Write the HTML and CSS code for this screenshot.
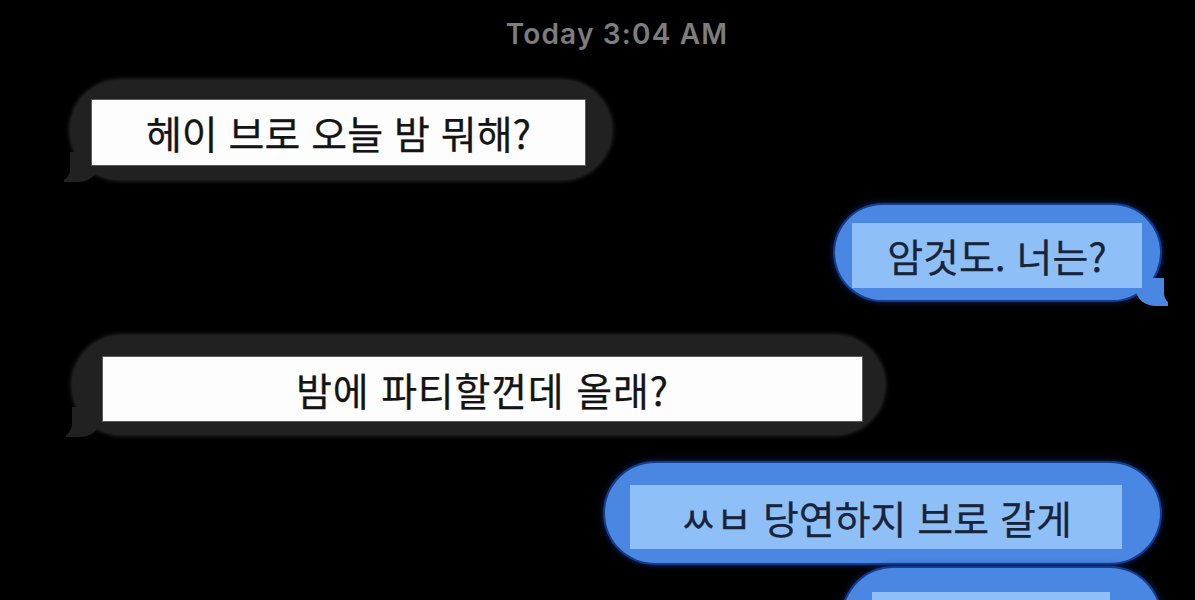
FILE: index.html
```html
<!DOCTYPE html>
<html lang="ko">
<head>
  <meta charset="UTF-8" />
  <meta name="viewport" content="width=device-width, initial-scale=1.0"/>
  <title>Messages</title>
  <link rel="stylesheet" href="styles.css">
</head>
<body>
  <main class="thread">
    <p class="stamp">Today 3:04 AM</p>

    <div class="bubble in first">
      <div class="patch">헤이 브로 오늘 밤 뭐해?</div>
    </div>

    <div class="bubble out second">
      <div class="patch">암것도. 너는?</div>
    </div>

    <div class="bubble in third">
      <div class="patch">밤에 파티할껀데 올래?</div>
    </div>

    <div class="bubble out fourth">
      <div class="patch">ㅆㅂ 당연하지 브로 갈게</div>
    </div>

    <div class="bubble out fifth">
      <div class="patch"></div>
    </div>
  </main>
</body>
</html>
```

FILE: styles.css
```css
body {
  margin: 0;
  padding: 0;
  background-color: #000;
  font-family: 'Noto Sans CJK KR', 'Noto Sans', sans-serif;
}
.thread {
  display: flex;
  flex-direction: column;
  height: 600px;
  padding-top: 14px;
  box-sizing: border-box;
  overflow: hidden;
}
.stamp {
  flex: none;
  margin: 0;
  padding-left: 39px;
  height: 40px;
  line-height: 40px;
  text-align: center;
  font-family: Inter, 'Liberation Sans', sans-serif;
  font-size: 28px;
  font-weight: 600;
  color: #7d7d7d;
  letter-spacing: 1.2px;
}
.bubble {
  flex: none;
  position: relative;
  display: flex;
  box-sizing: border-box;
  height: 100px;
  border-radius: 50px;
}
.bubble .patch {
  position: relative;
  z-index: 1;
  flex: 1;
  display: flex;
  align-items: center;
  justify-content: center;
  font-size: 39px;
  font-weight: 400;
  -webkit-text-stroke: 0.25px currentColor;
  line-height: 1;
  white-space: nowrap;
}
.in {
  align-self: flex-start;
  background-color: #212121;
  box-shadow: 0 0 4px 1px #2a2a2a;
}
.in .patch {
  background-color: #fdfdfd;
  color: #141414;
  box-shadow: 0 0 0 1px #5a5a5a;
}
.out {
  align-self: flex-end;
  margin-right: 35px;
  background-color: #4a87e3;
  box-shadow: 0 0 0 2px #163c8c, 0 0 6px 2px #0c2766;
}
.out .patch {
  background-color: #8ec0f7;
  color: #17243a;
}

/* tails */
.in.first::before,
.in.third::before {
  content: "";
  position: absolute;
  left: -6px;
  bottom: -2px;
  width: 34px;
  height: 30px;
  background-color: #212121;
  border-bottom-right-radius: 20px 16px;
}
.in.first::after,
.in.third::after {
  content: "";
  position: absolute;
  left: -18px;
  bottom: -3px;
  width: 18px;
  height: 34px;
  background-color: #000;
  border-bottom-right-radius: 16px 14px;
}
.out.second::before {
  content: "";
  position: absolute;
  right: -8px;
  bottom: -6px;
  width: 32px;
  height: 28px;
  background-color: #4a87e3;
  border-bottom-left-radius: 20px 16px;
}
.out.second::after {
  content: "";
  position: absolute;
  right: -24px;
  bottom: -7px;
  width: 20px;
  height: 32px;
  background-color: #000;
  border-bottom-left-radius: 16px 14px;
}

.first {
  margin-top: 26px;
  margin-left: 70px;
  width: 542px;
  padding: 20px 27px 15px 22px;
}
.second {
  margin-top: 25px;
  width: 325px;
  height: 95px;
  padding: 18px 18px 12px 17px;
}
.third {
  margin-top: 35px;
  margin-left: 72px;
  width: 813px;
  padding: 22px 23px 14px 31px;
}
.third .patch {
  letter-spacing: 0.8px;
}
.fourth {
  margin-top: 28px;
  width: 555px;
  padding: 22px 38px 14px 25px;
}
.fifth {
  margin-top: 5px;
  width: 317px;
  padding: 24px 50px 14px 29px;
}
```
